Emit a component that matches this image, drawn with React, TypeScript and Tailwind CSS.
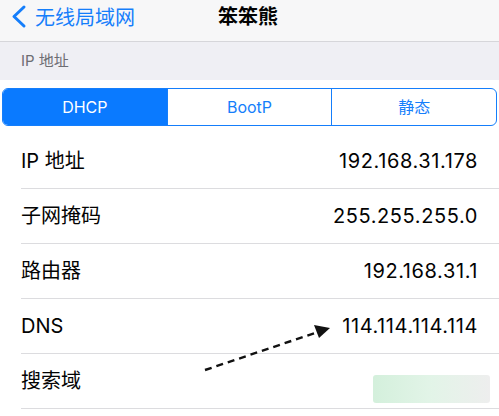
const rows = [
  { label: "IP 地址", value: "192.168.31.178" },
  { label: "子网掩码", value: "255.255.255.0" },
  { label: "路由器", value: "192.168.31.1" },
  { label: "DNS", value: "114.114.114.114" },
  { label: "搜索域", value: "" },
];

const segments = ["DHCP", "BootP", "静态"];

export default function App() {
  return (
    <div className="relative h-[416px] w-[499px] overflow-hidden bg-white font-['Inter','Noto_Sans_CJK_SC',sans-serif] text-[#030303]">
      {/* nav bar */}
      <div className="relative flex h-[42px] items-center border-b border-[#d6d6da] bg-[#f7f7f8]">
        <div className="flex items-center text-[#157efb]">
          <svg width="35" height="42" viewBox="0 0 35 42" className="shrink-0">
            <polyline points="24,7 14,16.5 24,26" fill="none" stroke="currentColor" strokeWidth="3" strokeLinecap="round" strokeLinejoin="round" />
          </svg>
          <span className="-mt-[5px] text-[20px] leading-none">无线局域网</span>
        </div>
        <div className="absolute left-[218px] top-[7px] text-[20px] font-bold leading-none">笨笨熊</div>
      </div>

      {/* section header */}
      <div className="flex h-[38px] items-center bg-[#efeff4] pl-[21px] text-[15px] text-[#6d6d72]">IP 地址</div>

      {/* segmented control */}
      <div className="px-[2px] pt-[8px]">
        <div className="flex h-[38px] overflow-hidden rounded-[6px] border border-[#157efb]">
          {segments.map((s, i) => (
            <div
              key={s}
              className={
                "flex flex-1 items-center justify-center text-[16px] " +
                (i === 0 ? "bg-[#0a7aff] text-white" : "text-[#157efb]") +
                (i > 0 ? " border-l border-[#157efb]" : "")
              }
            >
              {s}
            </div>
          ))}
        </div>
      </div>

      {/* rows */}
      <div className="mt-[8px]">
        {rows.map((r) => (
          <div key={r.label} className="ml-[21px] flex h-[55px] items-center justify-between border-b border-[#dcdcdf] pr-[21px] text-[20px]">
            <span>{r.label}</span>
            <span className="tracking-[0.6px]">{r.value}</span>
          </div>
        ))}
      </div>

      {/* annotation arrow */}
      <svg className="absolute left-0 top-0" width="499" height="416">
        <line x1="205" y1="370" x2="318" y2="332" stroke="#111" strokeWidth="2.4" strokeDasharray="7 5" />
        <polygon points="330,328 314,325 319,338" fill="#111" />
      </svg>

      {/* blurred watermark */}
      <div className="absolute left-[373px] top-[375px] h-[28px] w-[117px] rounded-[3px] bg-gradient-to-r from-[#cfeed8] via-[#dff3e5] to-[#ececec] opacity-90" />
    </div>
  );
}
